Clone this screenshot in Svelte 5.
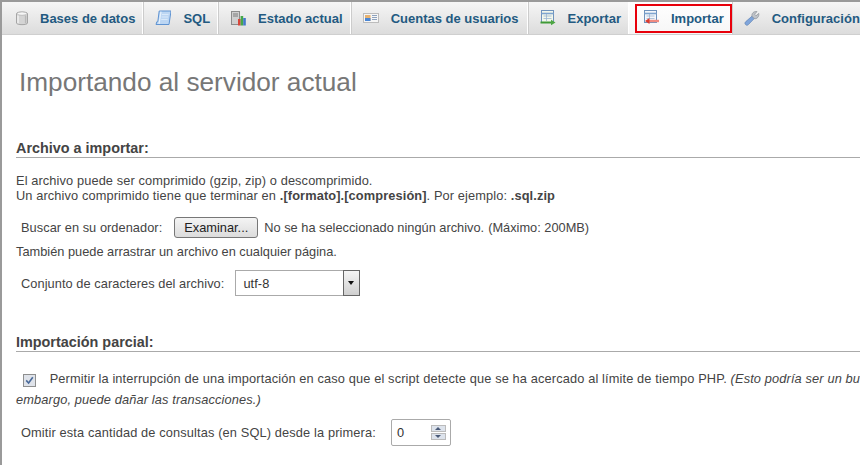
<script lang="ts">
const tabs = [
  { label: "Bases de datos", icon: "db" },
  { label: "SQL", icon: "sql" },
  { label: "Estado actual", icon: "status" },
  { label: "Cuentas de usuarios", icon: "users" },
  { label: "Exportar", icon: "export" },
  { label: "Importar", icon: "import", active: true },
  { label: "Configuración", icon: "config" },
];
</script>

<div class="page">
  <nav class="tabs">
    {#each tabs as tab}
      <div class="tab" class:active={tab.active}>
        <svg class="icon" viewBox="0 0 16 16" width="16" height="16">
          {#if tab.icon === "db"}
            <g transform="translate(1 0)">
              <path d="M3.5 3.5C3.5 1.6 14.5 1.6 14.5 3.5V13C14.5 15.2 3.5 15.2 3.5 13Z" fill="#d4d4d4" stroke="#a5a5a5"/>
              <path d="M5 5.5V13.2" stroke="#f2f2f2" stroke-width="1.4"/>
              <path d="M12.6 5.5V13.2" stroke="#b8b8b8" stroke-width="1.4"/>
              <ellipse cx="9" cy="3.6" rx="4.8" ry="1.7" fill="#f6f6f6" stroke="#b0b0b0" stroke-width=".7"/>
            </g>
          {:else if tab.icon === "sql"}
            <path d="M4.2 1H16L14 14.5H1L1.8 11.8H2.8Z" fill="#bcd6f3" stroke="#5f93d2"/>
            <path d="M6 1.6L4 13.8" stroke="#e6f1fc" stroke-width="1.2"/>
            <path d="M7 4.5H13.5M6.6 7H13M6.2 9.5H12.6" stroke="#dcebfa" stroke-width=".9"/>
          {:else if tab.icon === "status"}
            <rect x="1.5" y="1.5" width="8" height="13" fill="#cfcfcf" stroke="#8c8c8c"/>
            <path d="M3 4H8M3 6H8" stroke="#7c7c7c"/>
            <rect x="8" y="9" width="2.6" height="6.5" fill="#d8463a"/>
            <rect x="10.6" y="6" width="2.6" height="9.5" fill="#45a84a"/>
            <rect x="13.2" y="8" width="2.6" height="7.5" fill="#4379c9"/>
          {:else if tab.icon === "users"}
            <rect x="0.5" y="3.5" width="15" height="9" fill="#f6f6f6" stroke="#bcbcbc"/>
            <rect x="2" y="5" width="5.5" height="6" fill="#e6b271"/>
            <rect x="2" y="8" width="5.5" height="3" fill="#4a86d4"/>
            <path d="M9 5.5H14M9 7.5H14M9 9.5H14" stroke="#8ea2bd"/>
          {:else if tab.icon === "export"}
            <rect x="1.5" y="0.5" width="12" height="12" fill="#f2f7ec" stroke="#6f93bd"/>
            <path d="M1.5 3.5H13.5" stroke="#7ea4cf" stroke-width="1.6"/>
            <path d="M3.5 6H11.5M3.5 8.5H11.5M6.5 4V11" stroke="#9cb6d3" stroke-width=".8"/>
            <path d="M0.5 12.5H11.5" stroke="#3f9a37" stroke-width="2"/>
            <path d="M11 9.8L15.5 12.5L11 15.2Z" fill="#4da643"/>
          {:else if tab.icon === "import"}
            <rect x="1.5" y="0.5" width="12" height="12" fill="#f4f7fb" stroke="#6f93bd"/>
            <path d="M1.5 3.5H13.5" stroke="#7ea4cf" stroke-width="1.6"/>
            <path d="M3.5 6H11.5M3.5 8.5H11.5M6.5 4V8" stroke="#9cb6d3" stroke-width=".8"/>
            <path d="M6 11H16" stroke="#f08a80" stroke-width="2.4"/>
            <path d="M6.5 8L2 11L6.5 14Z" fill="#dd3a2e"/>
          {:else}
            <path d="M1.6 14.6C0.6 13.6 0.8 12.6 1.8 11.6L8 6.2L10.2 8.6L4.4 14.6C3.4 15.6 2.5 15.5 1.6 14.6Z" fill="#7fa5db" stroke="#5f82b5" stroke-width=".7"/>
            <path d="M8 6.2C7.4 3.6 9.6 1 13 1.6L10.6 4.2L12 5.8L14.8 3.4C15.2 6.8 13 9.2 10.2 8.6Z" fill="#bfc3c9" stroke="#8b9097" stroke-width=".7"/>
          {/if}
        </svg>
        <span>{tab.label}</span>
      </div>
    {/each}
  </nav>

  <main class="content">
    <h2>Importando al servidor actual</h2>

    <section class="imports">
      <h3>Archivo a importar:</h3>
      <p class="lead">
        El archivo puede ser comprimido (gzip, zip) o descomprimido.<br />
        Un archivo comprimido tiene que terminar en <b>.[formato].[compresión]</b>. Por ejemplo: <b>.sql.zip</b>
      </p>
      <div class="row file-row">
        <label for="file">Buscar en su ordenador:</label>
        <button id="file" class="browse">Examinar...</button>
        <span class="chosen">No se ha seleccionado ningún archivo.</span>
        <span>(Máximo: 200MB)</span>
      </div>
      <p class="hint">También puede arrastrar un archivo en cualquier página.</p>
      <div class="row charset-row">
        <label for="charset">Conjunto de caracteres del archivo:</label>
        <div id="charset" class="select">
          <span>utf-8</span>
          <div class="arrow"></div>
        </div>
      </div>
    </section>

    <section class="partial">
      <h3>Importación parcial:</h3>
      <p class="allow">
        <span class="check">
          <svg viewBox="0 0 9 9" width="9" height="9"><path d="M1.2 4.4L3.6 7L7.8 1.2" fill="none" stroke="#4a6a9a" stroke-width="1.6"/></svg>
        </span>
        Permitir la interrupción de una importación en caso que el script detecte que se ha acercado al límite de tiempo PHP. <i>(Esto podría ser un buen modo de importar archivos grandes, sin embargo, puede dañar las transacciones.)</i>
      </p>
      <div class="row skip-row">
        <label for="skip">Omitir esta cantidad de consultas (en SQL) desde la primera:</label>
        <div id="skip" class="number">
          <span>0</span>
          <div class="spin">
            <div class="up"></div>
            <div class="down"></div>
          </div>
        </div>
      </div>
    </section>
  </main>
</div>

<style>
:global(body) {
  background: #fff;
  overflow: hidden;
}

.page {
  width: 860px;
  height: 465px;
  overflow: hidden;
  box-sizing: border-box;
  border-top: 2px solid #9a9a9a;
  border-left: 2px solid #9a9a9a;
  font-family: "Liberation Sans", Arial, sans-serif;
  font-size: 12.8px;
  color: #444;
}

.tabs {
  display: flex;
  height: 32px;
  background: linear-gradient(#f6f6f6, #dcdcdc);
  border-bottom: 1px solid #cfcfcf;
  white-space: nowrap;
}

.tab {
  display: flex;
  align-items: center;
  flex: none;
  gap: 12px;
  padding: 0 7px 0 12px;
  border-right: 1px solid #fff;
  box-shadow: 1px 0 0 #ccc;
  font-size: 13px;
  font-weight: bold;
  color: #235a81;
}

.tab:first-child {
  padding-left: 10px;
}

.tab:nth-child(4) {
  padding-right: 8px;
}

.icon {
  flex: none;
}

.tab.active {
  position: relative;
  padding-left: 14px;
  background: linear-gradient(#fff, #f6f6f6);
}

.tab.active::after {
  content: "";
  position: absolute;
  left: 6px;
  top: 2px;
  right: -1px;
  bottom: 1px;
  border: 2px solid #e8000b;
}

.content {
  width: 1200px;
}

h2 {
  margin: 0;
  padding: 32px 0 0 17px;
  font-size: 26.2px;
  line-height: 30px;
  font-weight: normal;
  color: #777;
}

h3 {
  margin: 0;
  padding-bottom: 1px;
  border-bottom: 1px solid #aaa;
  font-size: 14.4px;
  line-height: 16px;
  color: #444;
}

section {
  padding-left: 14px;
}

.imports {
  margin-top: 43px;
}

.partial {
  margin-top: 38px;
}

p {
  margin: 0;
  line-height: 15px;
}

.lead {
  margin-top: 15px;
  letter-spacing: 0.11px;
}

.row {
  display: flex;
  align-items: center;
  padding-left: 5px;
}

.file-row {
  margin-top: 13px;
  height: 22px;
}

.file-row label {
  letter-spacing: 0.05px;
}

.browse {
  margin: 0 6px 0 12px;
  width: 84px;
  height: 21px;
  padding: 0;
  font: inherit;
  color: #222;
  border: 1px solid #777;
  border-radius: 3px;
  background: linear-gradient(#f4f4f4, #dcdcdc);
}

.chosen {
  margin-right: 4px;
}

.hint {
  margin-top: 6px;
}

.charset-row {
  margin-top: 11px;
  letter-spacing: 0.06px;
}

.select {
  display: flex;
  align-items: center;
  justify-content: space-between;
  box-sizing: border-box;
  margin-left: 11px;
  width: 125px;
  height: 26px;
  padding-left: 7px;
  border: 1px solid #aaa;
  color: #333;
}

.arrow {
  width: 17px;
  height: 26px;
  margin-right: -1px;
  border: 1px solid #666;
  box-sizing: border-box;
  background: linear-gradient(#f5f5f5, #cfcfcf);
  position: relative;
}

.arrow::after {
  content: "";
  position: absolute;
  left: 4px;
  top: 10px;
  border: 3px solid transparent;
  border-top: 4px solid #111;
  border-bottom: 0;
}

.allow {
  margin-top: 16px;
  line-height: 21px;
  width: 1100px;
  text-indent: 7px;
  letter-spacing: 0.13px;
}

.check {
  display: inline-flex;
  align-items: center;
  justify-content: center;
  box-sizing: border-box;
  width: 13px;
  height: 13px;
  margin-right: 10px;
  vertical-align: -2px;
  text-indent: 0;
  border: 1px solid #8e8f8f;
  background: #dfe3ea;
}

.skip-row {
  margin-top: 9px;
  letter-spacing: 0.13px;
}

.number {
  display: flex;
  align-items: center;
  justify-content: space-between;
  box-sizing: border-box;
  margin-left: 15px;
  width: 60px;
  height: 27px;
  padding: 0 4px 0 5px;
  border: 1px solid #aaa;
  border-radius: 2px;
  color: #333;
}

.spin {
  width: 15px;
  display: flex;
  flex-direction: column;
  gap: 1px;
}

.up, .down {
  height: 7px;
  background: #dde3ec;
  border: 1px solid #bbb;
  box-sizing: border-box;
  position: relative;
}

.up::after, .down::after {
  content: "";
  position: absolute;
  left: 3px;
  top: 1px;
  border: 3px solid transparent;
  border-top: 0;
  border-bottom: 3px solid #4a5a78;
}

.down::after {
  border-bottom: 0;
  border-top: 3px solid #4a5a78;
}
</style>
